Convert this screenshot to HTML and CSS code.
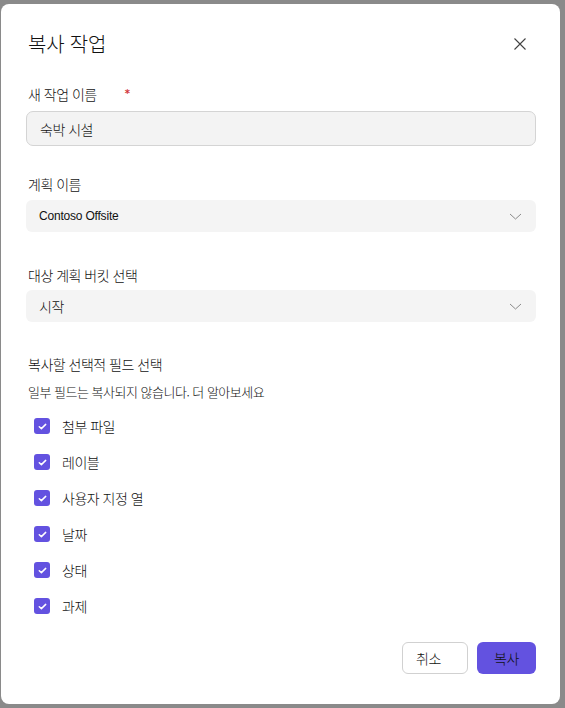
FILE: index.html
```html
<!DOCTYPE html>
<html lang="ko">
<head>
<meta charset="utf-8">
<title>복사 작업</title>
<link rel="stylesheet" href="styles.css">
</head>
<body>
<div class="dialog">
  <div class="header">
    <h1 class="title">복사 작업</h1>
    <button class="close" aria-label="닫기">
      <svg width="14" height="14" viewBox="0 0 14 14"><path d="M1.5 1.5 L12.5 12.5 M12.5 1.5 L1.5 12.5" stroke="#424242" stroke-width="1.1" fill="none"/></svg>
    </button>
  </div>

  <div class="label label-first">새 작업 이름<span class="req">*</span></div>
  <div class="input">숙박 시설</div>

  <div class="label label-gap">계획 이름</div>
  <div class="select">
    <span class="latin">Contoso Offsite</span>
    <svg class="chev" width="13" height="7" viewBox="0 0 13 7"><path d="M1 1 L6.5 6 L12 1" stroke="#8a8a8a" stroke-width="1" fill="none"/></svg>
  </div>

  <div class="label label-gap2">대상 계획 버킷 선택</div>
  <div class="select">
    <span>시작</span>
    <svg class="chev" width="13" height="7" viewBox="0 0 13 7"><path d="M1 1 L6.5 6 L12 1" stroke="#8a8a8a" stroke-width="1" fill="none"/></svg>
  </div>

  <div class="label label-gap3">복사할 선택적 필드 선택</div>
  <div class="desc">일부 필드는 복사되지 않습니다. 더 알아보세요</div>

  <ul class="checks">
    <li><span class="box"><svg width="9" height="7" viewBox="0 0 9 7"><path d="M1.3 3.7 L3.4 5.6 L7.7 1.4" stroke="#fff" stroke-width="1.5" fill="none" stroke-linecap="round" stroke-linejoin="round"/></svg></span>첨부 파일</li>
    <li><span class="box"><svg width="9" height="7" viewBox="0 0 9 7"><path d="M1.3 3.7 L3.4 5.6 L7.7 1.4" stroke="#fff" stroke-width="1.5" fill="none" stroke-linecap="round" stroke-linejoin="round"/></svg></span>레이블</li>
    <li><span class="box"><svg width="9" height="7" viewBox="0 0 9 7"><path d="M1.3 3.7 L3.4 5.6 L7.7 1.4" stroke="#fff" stroke-width="1.5" fill="none" stroke-linecap="round" stroke-linejoin="round"/></svg></span>사용자 지정 열</li>
    <li><span class="box"><svg width="9" height="7" viewBox="0 0 9 7"><path d="M1.3 3.7 L3.4 5.6 L7.7 1.4" stroke="#fff" stroke-width="1.5" fill="none" stroke-linecap="round" stroke-linejoin="round"/></svg></span>날짜</li>
    <li><span class="box"><svg width="9" height="7" viewBox="0 0 9 7"><path d="M1.3 3.7 L3.4 5.6 L7.7 1.4" stroke="#fff" stroke-width="1.5" fill="none" stroke-linecap="round" stroke-linejoin="round"/></svg></span>상태</li>
    <li><span class="box"><svg width="9" height="7" viewBox="0 0 9 7"><path d="M1.3 3.7 L3.4 5.6 L7.7 1.4" stroke="#fff" stroke-width="1.5" fill="none" stroke-linecap="round" stroke-linejoin="round"/></svg></span>과제</li>
  </ul>

  <div class="actions">
    <button class="btn btn-cancel">취소</button>
    <button class="btn btn-primary">복사</button>
  </div>
</div>
</body>
</html>
```

FILE: styles.css
```css
* { box-sizing: border-box; }
html, body { margin: 0; padding: 0; }
body {
  width: 565px;
  height: 708px;
  background: #8a8a8a;
  font-family: "Noto Sans CJK KR", "Noto Sans", sans-serif;
  font-weight: 300;
  color: #111111;
  overflow: hidden;
  padding: 4px 0 0 1px;
}
.dialog {
  width: 559px;
  height: 700px;
  background: #ffffff;
  border-radius: 8px;
  padding: 26px 24px 0 25px;
  display: flex;
  flex-direction: column;
}
.header {
  display: flex;
  align-items: center;
  justify-content: space-between;
  height: 28px;
}
.title {
  margin: 0 0 0 2px;
  font-size: 20px;
  font-weight: 300;
  line-height: 28px;
  letter-spacing: -0.2px;
}
.close {
  border: 0;
  background: transparent;
  padding: 0;
  width: 14px;
  height: 14px;
  margin-right: 9px;
  display: flex;
}
.label {
  font-size: 14px;
  line-height: 20px;
  height: 20px;
  padding-left: 2px;
  letter-spacing: -0.5px;
}
.label-first { margin-top: 26px; }
.label-gap { margin-top: 28px; }
.label-gap2 { margin-top: 33px; }
.label-gap3 { margin-top: 32px; }
.req {
  color: #d13438;
  font-family: "DejaVu Sans", sans-serif;
  font-weight: 700;
  font-size: 10px;
  line-height: 0;
  margin-left: 28px;
  position: relative;
  top: -3px;
}
.input {
  margin-top: 7px;
  height: 35px;
  background: #f3f3f3;
  border: 1px solid #d4d4d4;
  border-radius: 7px;
  padding: 0 13px;
  display: flex;
  align-items: center;
  font-size: 14px;
  letter-spacing: -0.5px;
}
.select {
  margin-top: 6px;
  height: 32px;
  background: #f4f4f4;
  border-radius: 6px;
  padding: 0 14px 0 13px;
  display: flex;
  align-items: center;
  justify-content: space-between;
  font-size: 14px;
  letter-spacing: -0.5px;
}
.label-gap2 + .select { margin-top: 5px; }
.latin {
  font-family: "Liberation Sans", Arial, sans-serif;
  font-weight: 400;
  font-size: 12px;
  letter-spacing: -0.2px;
}
.chev { display: block; }
.desc {
  margin-top: 8px;
  font-size: 13px;
  line-height: 20px;
  padding-left: 2px;
  letter-spacing: -0.5px;
}
.checks {
  list-style: none;
  margin: 6px 0 0 0;
  padding: 0 0 0 8px;
}
.checks li {
  height: 36px;
  display: flex;
  align-items: center;
  font-size: 14px;
  letter-spacing: -0.5px;
}
.box {
  width: 16px;
  height: 16px;
  border-radius: 3px;
  background: #6352e0;
  display: flex;
  align-items: center;
  justify-content: center;
  margin-right: 12px;
}
.box svg { display: block; }
.actions {
  margin-top: 18px;
  display: flex;
  justify-content: flex-end;
  gap: 9px;
}
.btn {
  height: 32px;
  border-radius: 6px;
  font-family: "Noto Sans CJK KR", "Noto Sans", sans-serif;
  font-weight: 300;
  font-size: 14px;
  color: #111111;
  padding: 0;
  letter-spacing: -0.4px;
}
.btn-cancel {
  width: 66px;
  background: #ffffff;
  border: 1px solid #d1d1d1;
  text-align: left;
  padding-left: 13px;
}
.btn-primary {
  width: 59px;
  background: #6352e0;
  border: 0;
}
```
